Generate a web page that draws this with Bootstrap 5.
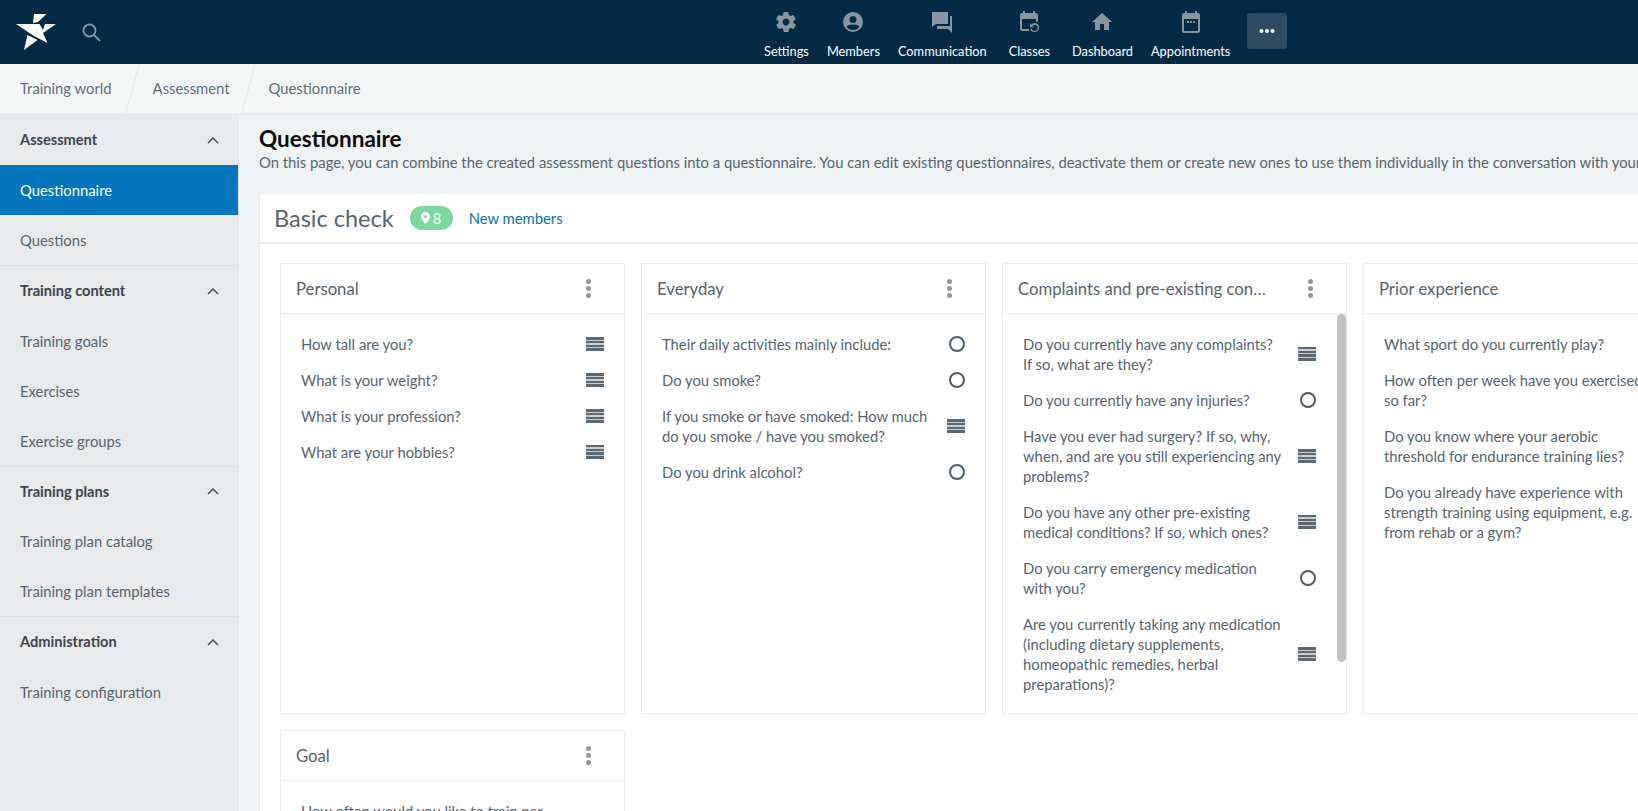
<!DOCTYPE html>
<html lang="en">
<head>
    <meta charset="UTF-8">
    <title>Questionnaire</title>
    <link href="https://cdn.jsdelivr.net/npm/bootstrap@5.3.2/dist/css/bootstrap.min.css" rel="stylesheet">
    <style>
        html, body { height: 100%; overflow: hidden; }
        body { font-family: Lato, "Open Sans", sans-serif; font-size: 14.8px; color: #56646e; background: #eff3f4; }
        .top-bar { height: 64px; background: #032a45; padding-left: 16px; }
        .top-logo { width: 40px; height: 38px; }
        .top-search { margin-left: 26px; width: 19px; height: 19px; }
        .top-menu { position: absolute; left: 755px; top: 0; height: 64px; }
        .top-item { color: #fff; font-size: 12.8px; line-height: 16px; text-align: center; padding: 0 9px; text-decoration: none; }
        .top-item svg { display: block; margin: 10px auto 9px; width: 24px; height: 24px; fill: #87969f; }
        .more-btn { width: 40px; height: 36px; background: #2e4a60; border-radius: 2px; margin: 13px 0 0 8px; color: #fff; }
        .crumb-bar { height: 51px; background: #f5f7f7; border-bottom: 2px solid #e8ecee; }
        .crumb-item { padding: 0 21px 0 20px; line-height: 49px; color: #5f6d77; position: relative; }
        .crumb-item + .crumb-item { padding-left: 20px; padding-right: 19px; }
        .crumb-item:last-child { padding-left: 20px; }
        .crumb-item:not(:last-child)::after { content: ""; position: absolute; right: 0; top: 0; width: 1px; height: 49px; background: #e3e7e9; transform: skewX(-15deg); }
        .page-wrap { height: calc(100% - 115px); }
        .side-menu { width: 239px; flex: none; background: #e8eaec; border-right: 1px solid #e3e7e9; height: 100vh; }
        .side-head { height: 50.67px; padding: 0 20px; color: #3b454d; font-size: 14.6px; font-weight: 700; border-top: 1px solid #dfe2e4; }
        .side-head:first-child { height: 50px; border-top: 0; }
        .side-link { display: block; height: 50px; line-height: 50px; padding: 0 20px; color: #56646e; text-decoration: none; }
        .side-link.current { background: #0375bc; color: #fff; }
        .side-head svg { width: 12px; height: 8px; margin-right: -1px; }
        .main-area { padding: 10px 0 0 20px; min-width: 0; }
        .page-title { font-size: 22.5px; line-height: 27px; font-weight: 700; color: #0b0b0b; margin: 0; }
        .page-desc { line-height: 20px; white-space: nowrap; margin: 0 0 21px; }
        .check-box { width: 1500px; background: #fff; border: 1px solid #e8ecee; }
        .check-head { height: 50px; padding: 0 14px; border-bottom: 2px solid #e8ecee; }
        .check-title { font-size: 23.5px; color: #56646e; margin-right: 16px; padding-top: 2px; }
        .pin-badge { width: 43px; height: 24px; background: #7dd8a0; color: #fff; border-radius: 12px; font-size: 14.8px; margin-right: 16px; }
        .pin-badge svg { width: 9px; height: 12px; fill: #fff; margin-right: 3px; }
        .check-link { color: #0375bc; text-decoration: none; }
        .check-grid { padding: 19px 20px 20px; gap: 16px; }
        .group-box { width: 345px; border: 1px solid #e8ecee; background: #fff; position: relative; }
        .group-head { height: 50px; padding: 3px 20px 0 15px; border-bottom: 1px solid #e8ecee; font-size: 16.7px; }
        .group-name { white-space: nowrap; overflow: hidden; text-overflow: ellipsis; }
        .group-dots { flex: none; width: 5px; margin-right: 13px; margin-left: 41px; position: relative; top: -2px; }
        .group-dots i { display: block; width: 5px; height: 5px; border-radius: 50%; background: #8f979e; margin: 2px 0; }
        .group-body { height: 399px; padding: 20px 20px 0 20px; gap: 16px; overflow: hidden; }
        .group-body.has-scroll { padding-right: 30px; }
        .q-row { line-height: 20px; white-space: nowrap; }
        .q-icon { flex: none; }
        .scroll-thumb { position: absolute; top: 50px; right: 0; width: 9px; height: 348px; background: #c2c2c2; border-radius: 5px; }
        .ico-lines { display: block; width: 18px; height: 14px; background: repeating-linear-gradient(#5a6872 0 2.5px, #c8ced2 2.5px 3.75px); }
        .ico-ring { display: block; width: 16px; height: 16px; border: 2.5px solid #4f5c66; border-radius: 50%; }
    </style>
</head>
<body>
<nav class="top-bar d-flex align-items-center position-relative">
    <svg class="top-logo" viewBox="0 0 40 38" fill="#fff"><polygon points="18,1 30.500,1 22,9 17,10"/><polygon points="0,11 23.500,11 27,17 29,11 40,11 27,20 31.500,30 18,23"/><polygon points="8,37 11.500,22 21.500,27"/></svg>
    <svg class="top-search" viewBox="0 0 19 19" fill="none" stroke="#87969f" stroke-width="1.8"><circle cx="7.5" cy="7.5" r="6"/><line x1="12" y1="12" x2="18" y2="18"/></svg>
    <div class="top-menu d-flex">
        <a class="top-item" href="#"><svg viewBox="0 0 24 24"><path d="M19.4 13c.1-.3.1-.7.1-1s0-.7-.1-1l2.1-1.6c.2-.2.2-.4.1-.6l-2-3.5c-.1-.2-.4-.3-.6-.2l-2.5 1c-.5-.4-1.1-.7-1.7-1l-.4-2.6c0-.3-.2-.5-.5-.5h-4c-.2 0-.5.2-.5.4l-.4 2.7c-.6.2-1.1.6-1.7 1l-2.5-1c-.2-.1-.5 0-.6.2l-2 3.5c-.1.2-.1.4.1.6L4.6 11c-.1.3-.1.7-.1 1s0 .7.1 1l-2.1 1.6c-.2.2-.2.4-.1.6l2 3.5c.1.2.4.3.6.2l2.5-1c.5.4 1.1.7 1.7 1l.4 2.6c0 .3.2.5.5.5h4c.2 0 .5-.2.5-.4l.4-2.7c.6-.2 1.1-.6 1.7-1l2.5 1c.2.1.5 0 .6-.2l2-3.5c.1-.2.1-.4-.1-.6L19.4 13zM12 15.5c-1.9 0-3.5-1.6-3.5-3.5s1.6-3.5 3.5-3.5 3.5 1.6 3.5 3.5-1.6 3.500-3.500 3.500z"/></svg>Settings</a>
        <a class="top-item" href="#"><svg viewBox="0 0 24 24"><path d="M12 2a10 10 0 1 0 0 20 10 10 0 0 0 0-20zm0 4a3.5 3.5 0 1 1 0 7 3.5 3.5 0 0 1 0-7zm0 14a8 8 0 0 1-6.4-3.2C6.4 15.2 9.4 14.5 12 14.5s5.600 .7 6.400 2.300A8 8 0 0 1 12 20z"/></svg>Members</a>
        <a class="top-item" href="#"><svg viewBox="0 0 24 24"><path d="M2 2h16v12H6l-4 3V2zM20 6h2v17l-4-4H7v-3h13V6z"/></svg>Communication</a>
        <a class="top-item ms-1" href="#"><svg viewBox="0 0 24 24"><path d="M6 1h2v2h8V1h2v2h1a2 2 0 0 1 2 2v7h-2V9H5v10h7v2H5a2 2 0 0 1-2-2V5a2 2 0 0 1 2-2h1V1z"/><path d="M17.500 13a4.500 4.500 0 1 1-4.300 5.800h1.600a3 3 0 1 0 .7-3l1.500 1.500h-4v-4l1.400 1.400a4.500 4.500 0 0 1 3.100-1.700z"/></svg>Classes</a>
        <a class="top-item ms-1" href="#"><svg viewBox="0 0 24 24"><path d="M10 20v-6h4v6h5v-8h3L12 3 2 12h3v8z"/></svg>Dashboard</a>
        <a class="top-item" href="#"><svg viewBox="0 0 24 24"><path d="M6 1h2v2h8V1h2v2h1a2 2 0 0 1 2 2v16a2 2 0 0 1-2 2H5a2 2 0 0 1-2-2V5a2 2 0 0 1 2-2h1V1zM5 9v12h14V9H5zm3 2h2v2H8zm3 0h2v2h-2zm3 0h2v2h-2z"/></svg>Appointments</a>
        <div class="more-btn d-flex align-items-center justify-content-center"><svg width="16" height="4" viewBox="0 0 16 4" fill="#fff"><circle cx="2.500" cy="2" r="2"/><circle cx="8" cy="2" r="2"/><circle cx="13.500" cy="2" r="2"/></svg></div>
    </div>
</nav>
<div class="crumb-bar d-flex">
    <div class="crumb-item">Training world</div>
    <div class="crumb-item">Assessment</div>
    <div class="crumb-item">Questionnaire</div>
</div>
<div class="page-wrap d-flex">
    <aside class="side-menu">
        <div class="side-head d-flex align-items-center justify-content-between">Assessment <svg viewBox="0 0 12 8" fill="none" stroke="#3b454d" stroke-width="1.400"><path d="M1 7l5-5 5 5"/></svg></div>
        <a class="side-link current" href="#">Questionnaire</a>
        <a class="side-link" href="#">Questions</a>
        <div class="side-head d-flex align-items-center justify-content-between">Training content <svg viewBox="0 0 12 8" fill="none" stroke="#3b454d" stroke-width="1.400"><path d="M1 7l5-5 5 5"/></svg></div>
        <a class="side-link" href="#">Training goals</a>
        <a class="side-link" href="#">Exercises</a>
        <a class="side-link" href="#">Exercise groups</a>
        <div class="side-head d-flex align-items-center justify-content-between">Training plans <svg viewBox="0 0 12 8" fill="none" stroke="#3b454d" stroke-width="1.400"><path d="M1 7l5-5 5 5"/></svg></div>
        <a class="side-link" href="#">Training plan catalog</a>
        <a class="side-link" href="#">Training plan templates</a>
        <div class="side-head d-flex align-items-center justify-content-between">Administration <svg viewBox="0 0 12 8" fill="none" stroke="#3b454d" stroke-width="1.400"><path d="M1 7l5-5 5 5"/></svg></div>
        <a class="side-link" href="#">Training configuration</a>
    </aside>
    <main class="main-area flex-grow-1">
        <h1 class="page-title">Questionnaire</h1>
        <p class="page-desc">On this page, you can combine the created assessment questions into a questionnaire. You can edit existing questionnaires, deactivate them or create new ones to use them individually in the conversation with your members.</p>
        <section class="check-box">
            <div class="check-head d-flex align-items-center">
                <span class="check-title">Basic check</span>
                <span class="pin-badge d-flex align-items-center justify-content-center"><svg viewBox="0 0 9 12"><path fill-rule="evenodd" d="M4.500 0A4.500 4.500 0 0 0 0 4.500C0 7.500 4.500 12 4.500 12S9 7.500 9 4.500A4.500 4.500 0 0 0 4.500 0zm0 3a1.500 1.500 0 1 1 0 3 1.500 1.500 0 0 1 0-3z"/></svg>8</span>
                <a class="check-link" href="#">New members</a>
            </div>
            <div class="check-grid d-flex flex-wrap" id="groupGrid"></div>
        </section>
    </main>
</div>
<script src="https://cdn.jsdelivr.net/npm/bootstrap@5.3.2/dist/js/bootstrap.bundle.min.js"></script>
<script>
const L = 'ico-lines', R = 'ico-ring';
const groups = [
    { name: 'Personal', rows: [['How tall are you?', L], ['What is your weight?', L], ['What is your profession?', L], ['What are your hobbies?', L]] },
    { name: 'Everyday', rows: [['Their daily activities mainly include:', R], ['Do you smoke?', R], ['If you smoke or have smoked: How much<br>do you smoke / have you smoked?', L], ['Do you drink alcohol?', R]] },
    { name: 'Complaints and pre-existing conditions', scroll: true, rows: [
        ['Do you currently have any complaints?<br>If so, what are they?', L],
        ['Do you currently have any injuries?', R],
        ['Have you ever had surgery? If so, why,<br>when, and are you still experiencing any<br>problems?', L],
        ['Do you have any other pre-existing<br>medical conditions? If so, which ones?', L],
        ['Do you carry emergency medication<br>with you?', R],
        ['Are you currently taking any medication<br>(including dietary supplements,<br>homeopathic remedies, herbal<br>preparations)?', L]] },
    { name: 'Prior experience', rows: [['What sport do you currently play?', L], ['How often per week have you exercised<br>so far?', L], ['Do you know where your aerobic<br>threshold for endurance training lies?', L], ['Do you already have experience with<br>strength training using equipment, e.g.<br>from rehab or a gym?', L]] },
    { name: 'Goal', rows: [['How often would you like to train per<br>week?', L]] }
];
document.getElementById('groupGrid').innerHTML = groups.map(g => `
    <div class="group-box">
        <div class="group-head d-flex align-items-center justify-content-between">
            <span class="group-name">${g.name}</span>
            <span class="group-dots"><i></i><i></i><i></i></span>
        </div>
        <div class="group-body d-flex flex-column ${g.scroll ? 'has-scroll' : ''}">
            ${g.rows.map(r => `<div class="q-row d-flex align-items-center justify-content-between"><span>${r[0]}</span><span class="q-icon ${r[1]}"></span></div>`).join('')}
        </div>
        ${g.scroll ? '<div class="scroll-thumb"></div>' : ''}
    </div>`).join('');
</script>
</body>
</html>
